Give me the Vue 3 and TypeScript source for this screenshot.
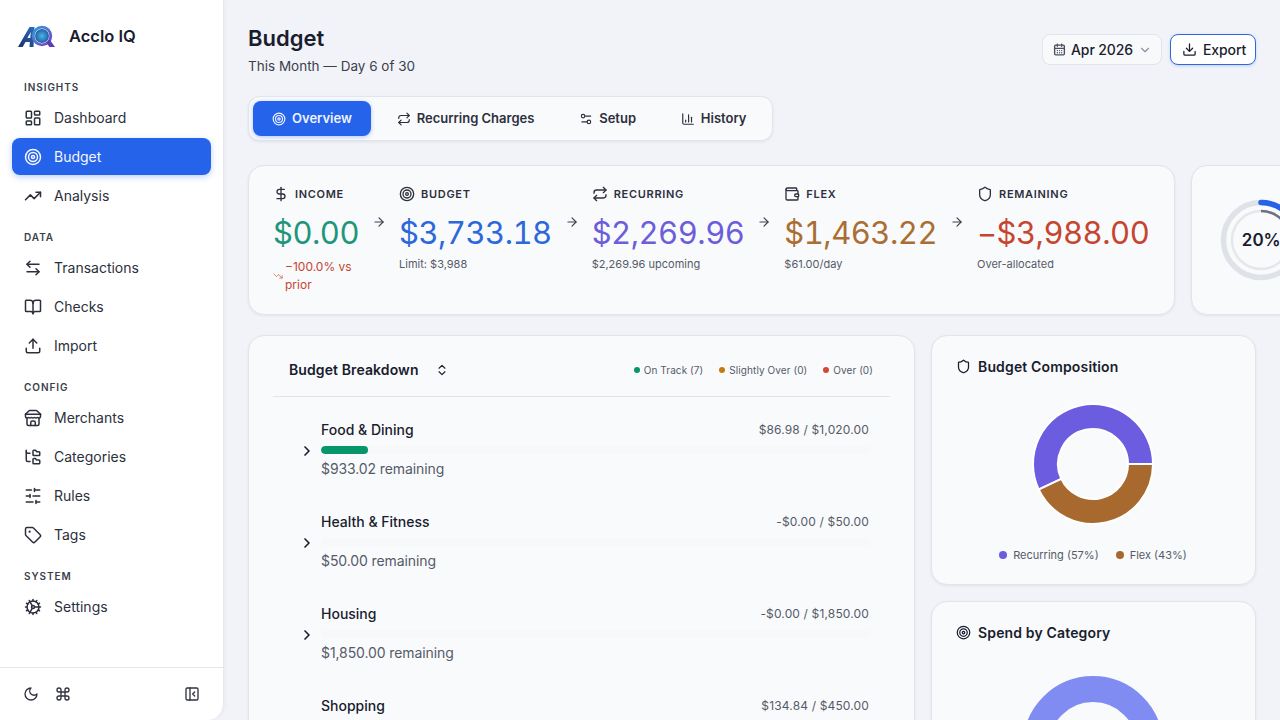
<script setup lang="ts">
import { h } from 'vue'

const circle = (cx: number, cy: number, r: number) =>
  `M${cx - r} ${cy}a${r} ${r} 0 1 0 ${2 * r} 0a${r} ${r} 0 1 0 ${-2 * r} 0`
const rrect = (x: number, y: number, w: number, ht: number, r: number) =>
  `M${x + r} ${y}h${w - 2 * r}a${r} ${r} 0 0 1 ${r} ${r}v${ht - 2 * r}a${r} ${r} 0 0 1 ${-r} ${r}h${-(w - 2 * r)}a${r} ${r} 0 0 1 ${-r} ${-r}v${-(ht - 2 * r)}a${r} ${r} 0 0 1 ${r} ${-r}z`

const icons: Record<string, string[]> = {
  dashboard: [rrect(3, 3, 7, 9, 1), rrect(14, 3, 7, 5, 1), rrect(14, 12, 7, 9, 1), rrect(3, 16, 7, 5, 1)],
  target: [circle(12, 12, 10), circle(12, 12, 6), circle(12, 12, 2)],
  trending: ['M22 7 13.5 15.5 8.5 10.5 2 17', 'M16 7h6v6'],
  trendingDown: ['M16 17h6v-6', 'm22 17-8.5-8.5-5 5L2 7'],
  transfer: ['M8 3 4 7l4 4', 'M4 7h16', 'm16 21 4-4-4-4', 'M20 17H4'],
  book: ['M12 7v14', 'M3 18a1 1 0 0 1-1-1V4a1 1 0 0 1 1-1h5a4 4 0 0 1 4 4 4 4 0 0 1 4-4h5a1 1 0 0 1 1 1v13a1 1 0 0 1-1 1h-6a3 3 0 0 0-3 3 3 3 0 0 0-3-3z'],
  upload: ['M21 15v4a2 2 0 0 1-2 2H5a2 2 0 0 1-2-2v-4', 'M17 8l-5-5-5 5', 'M12 3v12'],
  store: ['m2 7 4.41-4.41A2 2 0 0 1 7.83 2h8.34a2 2 0 0 1 1.42.59L22 7', 'M4 12v8a2 2 0 0 0 2 2h12a2 2 0 0 0 2-2v-8', 'M15 22v-4a2 2 0 0 0-2-2h-2a2 2 0 0 0-2 2v4', 'M2 7h20', 'M22 7v3a2 2 0 0 1-2 2a2.7 2.7 0 0 1-1.59-.63.7.7 0 0 0-.82 0A2.7 2.7 0 0 1 16 12a2.7 2.7 0 0 1-1.59-.63.7.7 0 0 0-.82 0A2.7 2.7 0 0 1 12 12a2.7 2.7 0 0 1-1.59-.63.7.7 0 0 0-.82 0A2.7 2.7 0 0 1 8 12a2.7 2.7 0 0 1-1.59-.63.7.7 0 0 0-.82 0A2.7 2.7 0 0 1 4 12a2 2 0 0 1-2-2V7'],
  tree: ['M20 10a1 1 0 0 0 1-1V6a1 1 0 0 0-1-1h-2.5a1 1 0 0 1-.8-.4l-.9-1.2A1 1 0 0 0 15 3h-2a1 1 0 0 0-1 1v5a1 1 0 0 0 1 1Z', 'M20 21a1 1 0 0 0 1-1v-3a1 1 0 0 0-1-1h-2.9a1 1 0 0 1-.88-.55l-.42-.85a1 1 0 0 0-.92-.6H13a1 1 0 0 0-1 1v5a1 1 0 0 0 1 1Z', 'M3 5a2 2 0 0 0 2 2h3', 'M3 3v13a2 2 0 0 0 2 2h3'],
  sliders: ['M21 4h-7', 'M10 4H3', 'M21 12h-9', 'M8 12H3', 'M21 20h-5', 'M12 20H3', 'M14 2v4', 'M8 10v4', 'M16 18v4'],
  tag: ['M12.586 2.586A2 2 0 0 0 11.172 2H4a2 2 0 0 0-2 2v7.172a2 2 0 0 0 .586 1.414l8.704 8.704a2.426 2.426 0 0 0 3.42 0l6.58-6.58a2.426 2.426 0 0 0 0-3.42z', circle(7.5, 7.5, 0.5)],
  cog: ['M12 20a8 8 0 1 0 0-16 8 8 0 0 0 0 16Z', 'M12 14a2 2 0 1 0 0-4 2 2 0 0 0 0 4Z', 'M12 2v2', 'M12 22v-2', 'm17 20.66-1-1.73', 'M11 10.27 7 3.34', 'm20.66 17-1.73-1', 'm3.34 7 1.73 1', 'M14 12h8', 'M2 12h2', 'm20.66 7-1.73 1', 'm3.34 17 1.73-1', 'm17 3.34-1 1.73', 'm11 13.73-4 6.93'],
  moon: ['M12 3a6 6 0 0 0 9 9 9 9 0 1 1-9-9Z'],
  command: ['M15 6v12a3 3 0 1 0 3-3H6a3 3 0 1 0 3 3V6a3 3 0 1 0-3 3h12a3 3 0 1 0-3-3'],
  panel: [rrect(3, 3, 18, 18, 2), 'M9 3v18', 'm16 15-3-3 3-3'],
  repeat: ['m17 2 4 4-4 4', 'M3 11v-1a4 4 0 0 1 4-4h14', 'm7 22-4-4 4-4', 'M21 13v1a4 4 0 0 1-4 4H3'],
  setup: ['M20 7h-9', 'M14 17H5', circle(17, 17, 3), circle(7, 7, 3)],
  chart: ['M3 3v16a2 2 0 0 0 2 2h16', 'M18 17V9', 'M13 17V5', 'M8 17v-3'],
  calendar: ['M8 2v4', 'M16 2v4', rrect(3, 4, 18, 18, 2), 'M3 10h18', 'M8 14h.01', 'M12 14h.01', 'M16 14h.01', 'M8 18h.01', 'M12 18h.01', 'M16 18h.01'],
  chevronDown: ['m6 9 6 6 6-6'],
  chevronRight: ['m9 18 6-6-6-6'],
  download: ['M21 15v4a2 2 0 0 1-2 2H5a2 2 0 0 1-2-2v-4', 'm7 10 5 5 5-5', 'M12 15V3'],
  dollar: ['M12 2v20', 'M17 5H9.5a3.5 3.5 0 0 0 0 7h5a3.5 3.5 0 0 1 0 7H6'],
  wallet: ['M19 7V4a1 1 0 0 0-1-1H5a2 2 0 0 0 0 4h15a1 1 0 0 1 1 1v4h-3a2 2 0 0 0 0 4h3a1 1 0 0 0 1-1v-2a1 1 0 0 0-1-1', 'M3 5v14a2 2 0 0 0 2 2h15a1 1 0 0 0 1-1v-4'],
  shield: ['M20 13c0 5-3.5 7.5-7.66 8.95a1 1 0 0 1-.67-.01C7.5 20.5 4 18 4 13V6a1 1 0 0 1 1-1c2 0 4.5-1.2 6.24-2.72a1.17 1.17 0 0 1 1.52 0C14.51 3.81 17 5 19 5a1 1 0 0 1 1 1z'],
  arrow: ['M5 12h14', 'm12 5 7 7-7 7'],
  updown: ['m7 15 5 5 5-5', 'm7 9 5-5 5 5'],
}

const Icon = (props: { name: string; size?: number; sw?: number }) =>
  h(
    'svg',
    {
      width: props.size ?? 18,
      height: props.size ?? 18,
      viewBox: '0 0 24 24',
      fill: 'none',
      stroke: 'currentColor',
      'stroke-width': props.sw ?? 2,
      'stroke-linecap': 'round',
      'stroke-linejoin': 'round',
      style: 'flex:none;display:block',
    },
    (icons[props.name] ?? []).map((d) => h('path', { d })),
  )
Icon.props = ['name', 'size', 'sw']

const navGroups = [
  { label: 'Insights', items: [
    { name: 'Dashboard', icon: 'dashboard' },
    { name: 'Budget', icon: 'target', active: true },
    { name: 'Analysis', icon: 'trending' },
  ] },
  { label: 'Data', items: [
    { name: 'Transactions', icon: 'transfer' },
    { name: 'Checks', icon: 'book' },
    { name: 'Import', icon: 'upload' },
  ] },
  { label: 'Config', items: [
    { name: 'Merchants', icon: 'store' },
    { name: 'Categories', icon: 'tree' },
    { name: 'Rules', icon: 'sliders' },
    { name: 'Tags', icon: 'tag' },
  ] },
  { label: 'System', items: [{ name: 'Settings', icon: 'cog' }] },
]

const tabs = [
  { name: 'Overview', icon: 'target', active: true },
  { name: 'Recurring Charges', icon: 'repeat' },
  { name: 'Setup', icon: 'setup' },
  { name: 'History', icon: 'chart' },
]

const kpis = [
  { label: 'Income', icon: 'dollar', value: '$0.00', color: '#1f957b', sub: '' },
  { label: 'Budget', icon: 'target', value: '$3,733.18', color: '#2b68dc', sub: 'Limit: $3,988' },
  { label: 'Recurring', icon: 'repeat', value: '$2,269.96', color: '#6c5ddb', sub: '$2,269.96 upcoming' },
  { label: 'Flex', icon: 'wallet', value: '$1,463.22', color: '#ab6e32', sub: '$61.00/day' },
  { label: 'Remaining', icon: 'shield', value: '−$3,988.00', color: '#c6452f', sub: 'Over-allocated' },
]

const legend = [
  { label: 'On Track (7)', color: '#059669' },
  { label: 'Slightly Over (0)', color: '#c27c0e' },
  { label: 'Over (0)', color: '#d14836' },
]

const rows = [
  { name: 'Food & Dining', amount: '$86.98 / $1,020.00', left: '$933.02 remaining', pct: 8.5 },
  { name: 'Health & Fitness', amount: '-$0.00 / $50.00', left: '$50.00 remaining', pct: 0 },
  { name: 'Housing', amount: '-$0.00 / $1,850.00', left: '$1,850.00 remaining', pct: 0 },
  { name: 'Shopping', amount: '$134.84 / $450.00', left: '$315.16 remaining', pct: 30 },
]

const polar = (r: number, deg: number) => {
  const a = (deg * Math.PI) / 180
  return `${(70 + r * Math.cos(a)).toFixed(2)} ${(70 + r * Math.sin(a)).toFixed(2)}`
}
const slice = (from: number, to: number) => {
  const large = to - from > 180 ? 1 : 0
  return `M${polar(60, from)}A60 60 0 ${large} 1 ${polar(60, to)}L${polar(35, to)}A35 35 0 ${large} 0 ${polar(35, from)}Z`
}
const flexSlice = slice(0, 154.8)
const recurringSlice = slice(154.8, 360)
</script>

<template>
  <div class="app">
    <aside class="sidebar">
      <div class="brand">
        <svg class="logo" width="38" height="24" viewBox="0 0 38 24" aria-label="Acclo IQ logo">
          <defs>
            <linearGradient id="lgA" x1="0" y1="1" x2="1" y2="0">
              <stop offset="0" stop-color="#16306a" />
              <stop offset="1" stop-color="#2f6fc0" />
            </linearGradient>
            <linearGradient id="lgQ" x1="0" y1="0" x2="1" y2="1">
              <stop offset="0" stop-color="#2f9bd8" />
              <stop offset="1" stop-color="#7a3fc4" />
            </linearGradient>
            <radialGradient id="lgC">
              <stop offset="0" stop-color="#4fb4e2" />
              <stop offset="1" stop-color="#1e5fa8" />
            </radialGradient>
          </defs>
          <path d="M0 23 11.500 3h5L15.500 23h-4l.4-5H7.500l-2.800 5zM9.400 14h2.800l.6-6z" fill="url(#lgA)" />
          <circle cx="24" cy="12" r="7" fill="url(#lgC)" />
          <circle cx="24" cy="12" r="8.800" fill="none" stroke="url(#lgQ)" stroke-width="2.800" />
          <path d="M28.500 19l3 4h5.500l-5.500-7.500z" fill="#5a3db8" />
        </svg>
        <span class="brand-name">Acclo IQ</span>
      </div>
      <nav class="nav">
        <div v-for="g in navGroups" :key="g.label" class="group">
          <div class="group-label">{{ g.label }}</div>
          <a v-for="i in g.items" :key="i.name" class="nav-item" :class="{ active: i.active }">
            <Icon :name="i.icon" :size="18" :sw="2" />
            <span>{{ i.name }}</span>
          </a>
        </div>
      </nav>
      <div class="side-foot">
        <div class="foot-left">
          <Icon name="moon" :size="16" />
          <Icon name="command" :size="16" />
        </div>
        <Icon name="panel" :size="16" />
      </div>
    </aside>

    <main class="main">
      <header class="page-head">
        <div>
          <h1>Budget</h1>
          <p>This Month — Day 6 of 30</p>
        </div>
        <div class="actions">
          <button class="btn date">
            <Icon class="cal" name="calendar" :size="13" :sw="2.500" />
            <span>Apr 2026</span>
            <Icon class="chev" name="chevronDown" :size="14" />
          </button>
          <button class="btn export">
            <Icon name="download" :size="15" />
            <span>Export</span>
          </button>
        </div>
      </header>

      <div class="tabs">
        <button v-for="t in tabs" :key="t.name" class="tab" :class="{ active: t.active }">
          <Icon :name="t.icon" :size="14" />
          <span>{{ t.name }}</span>
        </button>
      </div>

      <section class="kpi-row">
        <div class="card kpi-card">
          <template v-for="(k, idx) in kpis" :key="k.label">
            <Icon v-if="idx > 0" class="flow-arrow" name="arrow" :size="14" />
            <div class="kpi">
              <div class="kpi-label">
                <Icon :name="k.icon" :size="16" />
                <span>{{ k.label }}</span>
              </div>
              <div class="kpi-value" :style="{ color: k.color }">{{ k.value }}</div>
              <div v-if="k.sub" class="kpi-sub">{{ k.sub }}</div>
              <div v-else class="kpi-delta">
                <Icon name="trendingDown" :size="10" :sw="1.500" />
                <span>−100.0% vs prior</span>
              </div>
            </div>
          </template>
        </div>
        <div class="card ring-card">
          <div class="ring">
            <svg width="82" height="82" viewBox="0 0 82 82">
              <circle cx="41" cy="41" r="37.500" fill="none" stroke="#dfe2e8" stroke-width="5.500" />
              <circle cx="41" cy="41" r="37.500" fill="none" stroke="#2563eb" stroke-width="5.500" stroke-linecap="round" pathLength="100" stroke-dasharray="20 80" transform="rotate(-90 41 41)" />
              <circle cx="41" cy="41" r="29" fill="none" stroke="#e5e7eb" stroke-width="2.500" />
              <circle cx="41" cy="41" r="29" fill="none" stroke="#6b7280" stroke-width="2.500" pathLength="100" stroke-dasharray="20 80" transform="rotate(-90 41 41)" />
            </svg>
            <span class="ring-text">20%</span>
          </div>
        </div>
      </section>

      <section class="content">
        <div class="card breakdown">
          <div class="bd-head">
            <div class="bd-title">
              <span>Budget Breakdown</span>
              <Icon name="updown" :size="14" />
            </div>
            <div class="bd-legend">
              <span v-for="l in legend" :key="l.label" class="bd-leg">
                <i :style="{ background: l.color }"></i>{{ l.label }}
              </span>
            </div>
          </div>
          <div class="bd-rows">
            <div v-for="r in rows" :key="r.name" class="bd-row">
              <Icon class="row-chev" name="chevronRight" :size="16" :sw="2.500" />
              <div class="row-body">
                <div class="row-top">
                  <span class="row-name">{{ r.name }}</span>
                  <span class="row-amount">{{ r.amount }}</span>
                </div>
                <div class="track"><div class="fill" :style="{ width: r.pct + '%' }"></div></div>
                <div class="row-left">{{ r.left }}</div>
              </div>
            </div>
          </div>
        </div>

        <div class="side-col">
          <div class="card side-card comp">
            <div class="side-title">
              <Icon name="shield" :size="15" />
              <span>Budget Composition</span>
            </div>
            <svg class="donut" width="140" height="140" viewBox="0 0 140 140">
              <path :d="recurringSlice" fill="#6c5ce0" stroke="#fff" stroke-width="2" />
              <path :d="flexSlice" fill="#a8692e" stroke="#fff" stroke-width="2" />
            </svg>
            <div class="comp-legend">
              <span class="comp-leg"><i style="background:#6c5ce0"></i>Recurring (57%)</span>
              <span class="comp-leg"><i style="background:#a8692e"></i>Flex (43%)</span>
            </div>
          </div>
          <div class="card side-card spend">
            <div class="side-title">
              <Icon name="target" :size="15" />
              <span>Spend by Category</span>
            </div>
            <svg class="donut2" width="140" height="140" viewBox="0 0 140 140">
              <circle cx="70" cy="70" r="57" fill="none" stroke="#818cf2" stroke-width="26" />
            </svg>
          </div>
        </div>
      </section>
    </main>
  </div>
</template>

<style>
html, body { margin: 0; background: #f1f3f8; overflow: hidden; }
</style>

<style scoped>
* { box-sizing: border-box; }
.app {
  display: flex;
  width: 1280px;
  height: 720px;
  overflow: hidden;
  background: #f1f3f8;
  color: #1a1d2e;
  font-family: Inter, "Liberation Sans", sans-serif;
}
.sidebar {
  flex: none;
  width: 224px;
  height: 720px;
  background: #fff;
  border-right: 1px solid #e6e8ee;
  border-radius: 0 0 16px 0;
  box-shadow: 1px 0 4px rgba(20, 25, 50, .04);
  display: flex;
  flex-direction: column;
}
.brand { height: 72px; display: flex; align-items: center; padding-left: 18px; gap: 13px; }
.logo { flex: none; }
.brand-name { font-size: 16.500px; font-weight: 600; color: #1a1d2e; }
.nav { flex: 1; padding: 0 12px; }
.group { margin-bottom: 16px; }
.group-label {
  font-size: 10px;
  line-height: 14px;
  font-weight: 600;
  letter-spacing: .95px;
  text-transform: uppercase;
  color: #3b3f4c;
  padding-left: 12px;
  margin: 8px 0 5px;
}
.nav-item {
  display: flex;
  align-items: center;
  gap: 12px;
  height: 37px;
  margin-bottom: 2px;
  padding-left: 12px;
  border-radius: 8px;
  font-size: 14px;
  color: #2c303c;
}
.nav-item.active {
  background: #2563eb;
  color: #f4f7ff;
  box-shadow: 0 2px 6px rgba(37, 99, 235, .3);
}
.side-foot {
  height: 53px;
  border-top: 1px solid #e4e6eb;
  display: flex;
  align-items: center;
  justify-content: space-between;
  padding: 0 23px;
  color: #2f3340;
}
.foot-left { display: flex; gap: 16px; }

.main { flex: 1; min-width: 0; padding: 22px 24px 0; overflow: hidden; }
.page-head { display: flex; justify-content: space-between; align-items: flex-start; height: 74px; }
h1 { margin: 0; font-size: 22px; line-height: 32px; font-weight: 600; color: #1a1d2e; }
.page-head p { margin: 1px 0 0; font-size: 13.500px; line-height: 22px; color: #3b3f4c; }
.actions { display: flex; gap: 8px; margin-top: 12px; }
.btn {
  height: 31px;
  display: flex;
  align-items: center;
  border-radius: 8px;
  font-family: inherit;
  font-size: 14px;
  font-weight: 500;
  letter-spacing: -.1px;
  white-space: nowrap;
  color: #1a1d2e;
  cursor: pointer;
}
.btn span { margin-top: -1px; }
.date { width: 120px; padding: 0 10px; gap: 5px; background: #f8f9fb; border: 1px solid #e1e4ea; }
.date .cal { color: #4b5060; }
.date .chev { color: #8b90a0; }
.export { width: 86px; padding: 0 11px; gap: 6px; background: #fff; border: 1px solid #2f68d8; box-shadow: 0 1px 3px rgba(37, 99, 235, .25); }

.tabs {
  display: inline-flex;
  gap: 6.800px;
  padding: 4px 7px 4px 4px;
  background: #f9fafc;
  border: 1px solid #e2e5ea;
  border-radius: 12px;
  box-shadow: 0 1px 3px rgba(20, 25, 50, .08);
  vertical-align: top;
}
.tab {
  display: flex;
  align-items: center;
  gap: 6px;
  height: 35px;
  padding: 0 19px;
  border: 0;
  background: none;
  border-radius: 8px;
  font-family: inherit;
  font-size: 13px;
  font-weight: 600;
  color: #2c303c;
}
.tab span { margin-top: -1px; }
.tab.active { background: #2563eb; color: #eef3ff; box-shadow: 0 1px 4px rgba(37, 99, 235, .35); }

.card {
  background: #f9fafc;
  border: 1px solid #e1e4e9;
  border-radius: 16px;
  box-shadow: 0 1px 3px rgba(20, 25, 50, .07);
}
.kpi-row { display: flex; gap: 16px; margin-top: 24px; height: 150px; }
.kpi-card { flex: none; display: flex; align-items: flex-start; gap: 13px; padding: 20px 25px 0 24px; }
.flow-arrow { margin-top: 29px; color: #3b3f4c; }
.kpi { width: min-content; }
.kpi-label {
  display: flex;
  align-items: center;
  gap: 6px;
  height: 16px;
  font-size: 11px;
  font-weight: 600;
  letter-spacing: .7px;
  text-transform: uppercase;
  white-space: nowrap;
  color: #2c303c;
}
.kpi-value {
  margin-top: 11px;
  font-size: 31px;
  line-height: 40px;
  font-weight: 400;
  font-variant-numeric: tabular-nums;
  letter-spacing: -.5px;
  white-space: nowrap;
}
.kpi-sub { margin-top: 1px; font-size: 11px; line-height: 20px; color: #555a68; white-space: nowrap; }
.kpi-delta {
  margin-top: 5px;
  display: flex;
  align-items: center;
  gap: 2px;
  font-size: 12px;
  line-height: 18px;
  color: #c6452f;
}
.ring-card { flex: none; width: 200px; display: flex; align-items: center; padding-left: 28px; }
.ring { position: relative; width: 82px; height: 82px; }
.ring svg { display: block; }
.ring-text {
  position: absolute;
  inset: 0;
  display: flex;
  align-items: center;
  justify-content: center;
  font-size: 17px;
  font-weight: 600;
}

.content { display: grid; grid-template-columns: 1fr 325px; gap: 16px; margin-top: 20px; align-items: start; }
.breakdown { padding: 11px 24px 0; height: 600px; }
.bd-head {
  display: flex;
  align-items: center;
  justify-content: space-between;
  height: 50px;
  padding: 0 17px 4px 16px;
  border-bottom: 1px solid #e1e4e9;
}
.bd-title { display: flex; align-items: center; gap: 16px; font-size: 14px; font-weight: 600; letter-spacing: .1px; }
.bd-legend { display: flex; gap: 16px; font-size: 10px; letter-spacing: .08px; color: #555a68; }
.bd-leg { display: flex; align-items: center; gap: 4px; }
.bd-leg i { width: 6px; height: 6px; border-radius: 50%; }
.bd-rows { padding-top: 7px; }
.bd-row { display: flex; align-items: center; padding: 16px 21px 16px 26px; }
.row-chev { margin: 2px 6px 0 0; color: #1a1d2e; }
.row-body { flex: 1; min-width: 0; }
.row-top { display: flex; justify-content: space-between; align-items: center; height: 20px; margin-top: -1px; }
.row-name { font-size: 14px; font-weight: 500; color: #1a1d2e; }
.row-amount { font-size: 12px; letter-spacing: .15px; color: #555a68; }
.track { margin-top: 7px; height: 8px; border-radius: 4px; background: #f7f8fa; overflow: hidden; }
.fill { height: 100%; border-radius: 4px; background: #059669; }
.row-left { margin-top: 4px; font-size: 14px; line-height: 22px; letter-spacing: -.1px; color: #555a68; }

.side-col { display: flex; flex-direction: column; gap: 16px; }
.side-card { padding: 20px 25px 0 24px; overflow: hidden; }
.side-title { display: flex; align-items: center; gap: 7px; height: 20px; font-size: 14px; font-weight: 600; letter-spacing: .15px; }
.comp { height: 250px; }
.spend { height: 300px; }
.donut { display: block; margin: 18px auto 0; }
.donut2 { display: block; margin: 34px auto 0; }
.comp-legend { display: flex; justify-content: center; gap: 17px; margin-top: 14px; font-size: 11px; color: #555a68; }
.comp-leg { display: flex; align-items: center; gap: 6px; }
.comp-leg i { width: 8px; height: 8px; border-radius: 50%; }
</style>
